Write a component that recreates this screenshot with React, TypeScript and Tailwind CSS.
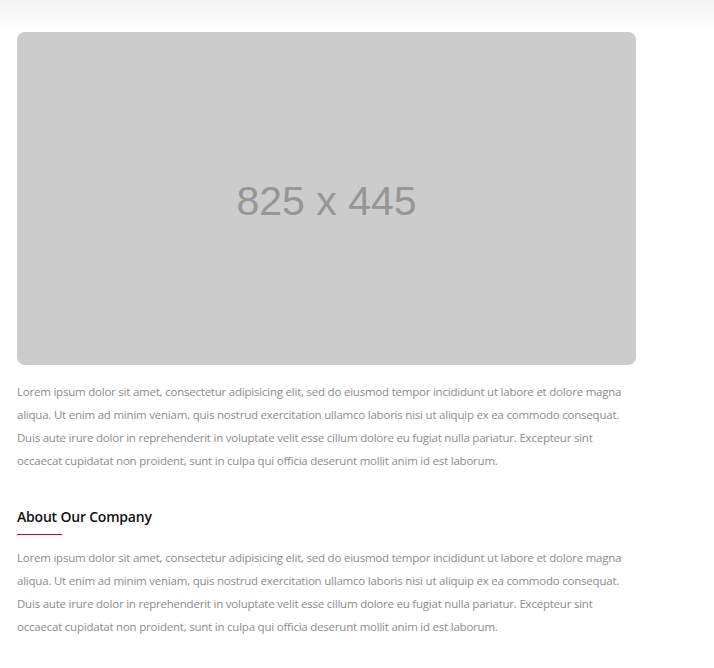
const lorem =
  "Lorem ipsum dolor sit amet, consectetur adipisicing elit, sed do eiusmod tempor incididunt ut labore et dolore magna aliqua. Ut enim ad minim veniam, quis nostrud exercitation ullamco laboris nisi ut aliquip ex ea commodo consequat. Duis aute irure dolor in reprehenderit in voluptate velit esse cillum dolore eu fugiat nulla pariatur. Excepteur sint occaecat cupidatat non proident, sunt in culpa qui officia deserunt mollit anim id est laborum.";

export default function App() {
  return (
    <div className="min-h-[668px] bg-white" style={{ fontFamily: '"Open Sans", "Noto Sans", sans-serif' }}>
      {/* top fade */}
      <div className="h-8 bg-linear-to-b from-[#f4f4f4] to-white" />

      <div className="w-[619px] ml-[17px]">
        {/* placeholder image */}
        <div className="flex h-[333px] items-center justify-center rounded-lg bg-[#cccccc] pt-[7px]">
          <span
            className="text-[41px] text-[#969696]"
            style={{ fontFamily: '"Liberation Sans", Arial, sans-serif' }}
          >
            825 x 445
          </span>
        </div>

        <p className="mt-[15px] text-[11.5px] leading-[23px] text-[#8c8c8c] tracking-[-0.22px]">{lorem}</p>

        <h3 className="mt-[34px] text-[14px] font-semibold text-[#111111] tracking-[-0.2px]">About Our Company</h3>
        <div className="mt-[7px] h-px w-[45px] bg-[#e00010]" />

        <p className="mt-[11px] text-[11.5px] leading-[23px] text-[#8c8c8c] tracking-[-0.22px]">{lorem}</p>
      </div>
    </div>
  );
}
